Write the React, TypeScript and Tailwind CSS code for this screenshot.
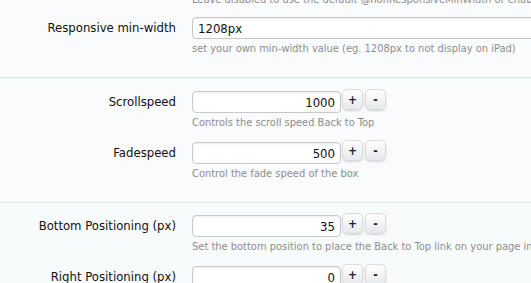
import React from "react";

const font = { fontFamily: '"DejaVu Sans Condensed", "DejaVu Sans", sans-serif' };

function SpinRow({ label, value, hint }: { label: string; value: string; hint?: string }) {
  return (
    <div className="flex">
      <div className="w-[176px] shrink-0 text-right text-[13px] leading-[22px] text-[#111] pt-[0px]">{label}</div>
      <div className="ml-4 flex flex-col">
        <div className="flex items-start">
          <input
            readOnly
            value={value}
            className="h-[22px] w-[149px] rounded-[4px] border border-[#c9c9c9] bg-white px-[5px] text-right text-[13px] text-[#111] shadow-[inset_0_1px_2px_rgba(0,0,0,0.08)] outline-none"
            style={font}
          />
          <button className="ml-[1px] mt-[-2px] h-[21px] w-[21px] rounded-[5px] border border-[#dcdcdc] bg-gradient-to-b from-white to-[#e6e8ec] text-[12px] font-bold leading-none text-[#222] shadow-[0_1px_2px_rgba(0,0,0,0.15)]">+</button>
          <button className="ml-[2px] mt-[-2px] h-[21px] w-[21px] rounded-[5px] border border-[#dcdcdc] bg-gradient-to-b from-white to-[#e6e8ec] text-[12px] font-bold leading-none text-[#222] shadow-[0_1px_2px_rgba(0,0,0,0.15)]">-</button>
        </div>
        {hint && <div className="mt-[3px] whitespace-nowrap text-[11px] leading-[14px] text-[#8d8d8d]">{hint}</div>}
      </div>
    </div>
  );
}

export default function App() {
  return (
    <div className="h-[283px] w-[531px] overflow-hidden bg-[#fafbfd]" style={font}>
      <div className="pb-[21px]">
        <div className="ml-[192px] mt-[-7px] whitespace-nowrap text-[11px] leading-[14px] text-[#8d8d8d]">
          Leave disabled to use the default @nonResponsiveMinWidth or enable
        </div>
        <div className="mt-[10px] flex">
          <div className="w-[176px] shrink-0 text-right text-[13px] leading-[22px] text-[#111]">Responsive min-width</div>
          <div className="ml-4 flex flex-col">
            <input
              readOnly
              value="1208px"
              className="h-[22px] w-[380px] rounded-[4px] border border-[#c9c9c9] bg-white px-[5px] text-[13px] text-[#111] shadow-[inset_0_1px_2px_rgba(0,0,0,0.08)] outline-none"
              style={font}
            />
            <div className="mt-[3px] whitespace-nowrap text-[11px] leading-[14px] text-[#8d8d8d]">
              set your own min-width value (eg. 1208px to not display on iPad)
            </div>
          </div>
        </div>
      </div>
      <div className="flex flex-col gap-[12px] border-t border-[#d5e5e6] pb-[21px] pt-[13px]">
        <SpinRow label="Scrollspeed" value="1000" hint="Controls the scroll speed Back to Top" />
        <SpinRow label="Fadespeed" value="500" hint="Control the fade speed of the box" />
      </div>
      <div className="flex flex-col gap-[12px] border-t border-[#d5e5e6] bg-[#f8fbfc] pb-[21px] pt-[12px]">
        <SpinRow label="Bottom Positioning (px)" value="35" hint="Set the bottom position to place the Back to Top link on your page in px" />
        <SpinRow label="Right Positioning (px)" value="0" />
      </div>
    </div>
  );
}
